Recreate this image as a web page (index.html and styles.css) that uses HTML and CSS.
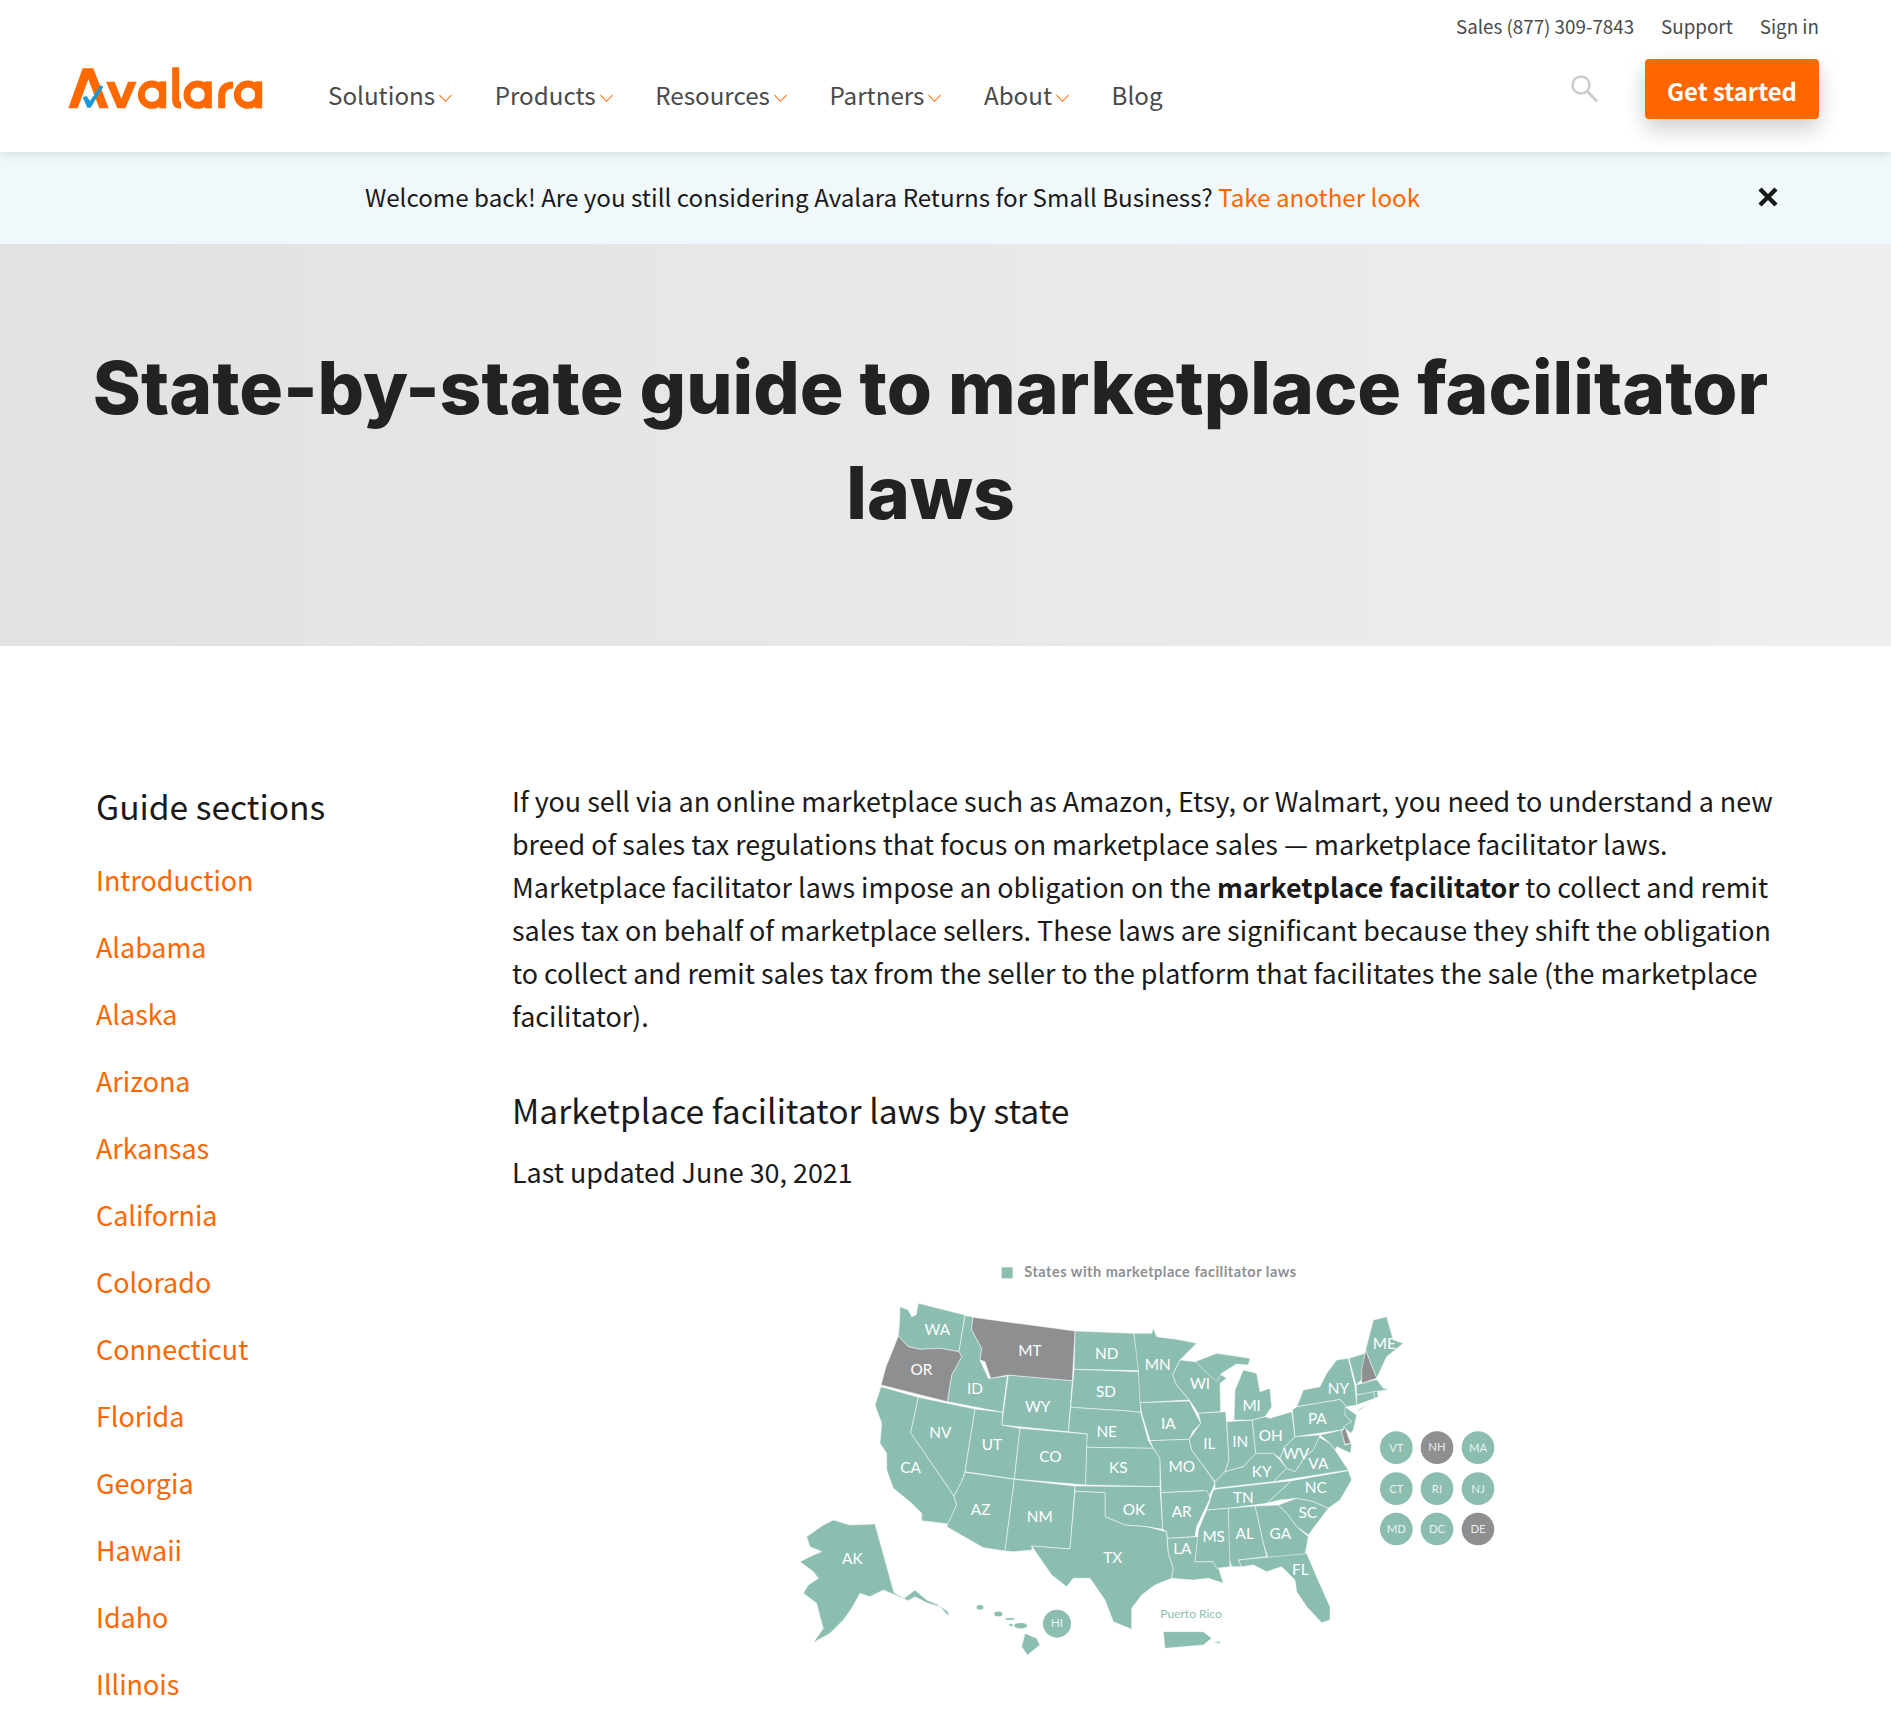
FILE: index.html
```html
<!DOCTYPE html>
<html>
<head>
  <title>State-by-state guide to marketplace facilitator laws</title>
  <meta name="viewport" content="width=device-width, initial-scale=1.0">
  <link rel="stylesheet" href="styles.css">
</head>
<body>
  <header class="site-header">
    <div class="top-links">
      <a href="#">Sales (877) 309-7843</a>
      <a href="#">Support</a>
      <a href="#">Sign in</a>
    </div>
    <div class="main-row">
      <a class="logo" href="#" aria-label="Avalara">
        <svg width="240" height="90" viewBox="0 0 720 270">
          <g fill="#ff6900">
            <polygon points="55,205 98,85 130,85 176,205 148,205 115,118 83,205"/>
            <polygon points="168,125 194,125 214,176 234,125 260,125 226,205 202,205"/>
          </g>
          <polygon points="98,172 110,168 120,183 152,136 160,140 122,203 112,203" fill="#1a9ad6"/>
          <g fill="none" stroke="#ff6900" stroke-width="21">
            <circle cx="306" cy="164" r="32"/>
            <line x1="338" y1="124" x2="338" y2="205"/>
            <path d="M377 82 V180 Q377 196 393 196"/>
            <circle cx="443" cy="164" r="32"/>
            <line x1="475" y1="124" x2="475" y2="205"/>
            <path d="M515 205 V168 Q515 136 549 135"/>
            <circle cx="594" cy="164" r="32"/>
            <line x1="626" y1="124" x2="626" y2="205"/>
          </g>
        </svg>
      </a>
      <nav class="main-nav">
        <a href="#">Solutions<span class="caret"></span></a>
        <a href="#">Products<span class="caret"></span></a>
        <a href="#">Resources<span class="caret"></span></a>
        <a href="#">Partners<span class="caret"></span></a>
        <a href="#">About<span class="caret"></span></a>
        <a href="#">Blog</a>
      </nav>
      <svg class="search-icon" width="30" height="30" viewBox="0 0 30 30">
        <circle cx="11" cy="11" r="8.5" fill="none" stroke="#ccc" stroke-width="2.5"/>
        <line x1="17" y1="17" x2="27" y2="27.5" stroke="#ccc" stroke-width="3"/>
      </svg>
      <a class="btn-start" href="#">Get started</a>
    </div>
  </header>

  <div class="welcome-bar">
    <p>Welcome back! Are you still considering Avalara Returns for Small Business? <a href="#">Take another look</a></p>
    <svg class="close-icon" width="20" height="20" viewBox="0 0 20 20">
      <path d="M2 2 L18 18 M18 2 L2 18" stroke="#1a1a1a" stroke-width="4.4" fill="none"/>
    </svg>
  </div>

  <section class="hero">
    <h1>State-by-state guide to marketplace facilitator laws</h1>
  </section>

  <div class="guide">
    <aside class="sections">
      <h2>Guide sections</h2>
      <ul>
        <li><a href="#">Introduction</a></li>
        <li><a href="#">Alabama</a></li>
        <li><a href="#">Alaska</a></li>
        <li><a href="#">Arizona</a></li>
        <li><a href="#">Arkansas</a></li>
        <li><a href="#">California</a></li>
        <li><a href="#">Colorado</a></li>
        <li><a href="#">Connecticut</a></li>
        <li><a href="#">Florida</a></li>
        <li><a href="#">Georgia</a></li>
        <li><a href="#">Hawaii</a></li>
        <li><a href="#">Idaho</a></li>
        <li><a href="#">Illinois</a></li>
      </ul>
    </aside>
    <main class="article">
      <p class="intro">If you sell via an online marketplace such as Amazon, Etsy, or Walmart, you need to understand a new breed of sales tax regulations that focus on marketplace sales — marketplace facilitator laws. Marketplace facilitator laws impose an obligation on the <b>marketplace facilitator</b> to collect and remit sales tax on behalf of marketplace sellers. These laws are significant because they shift the obligation to collect and remit sales tax from the seller to the platform that facilitates the sale (the marketplace facilitator).</p>
      <h3>Marketplace facilitator laws by state</h3>
      <p class="updated">Last updated June 30, 2021</p>

      <!-- map, coordinates are 3x page pixels -->
      <svg class="us-map" width="740" height="420" viewBox="0 0 2220 1260">
        <rect x="665" y="52" width="33" height="33" fill="#8bbdb0"/>
        <text class="legend" x="733" y="80">States with marketplace facilitator laws</text>

        <g class="states">
          <polygon points="360,170 385,180 395,200 408,195 415,160 555,195 537,305 480,295 420,298 385,290 355,258 358,225"/>
          <polygon points="303,410 415,442 392,548 522,738 530,765 505,822 425,812 425,790 395,760 340,715 320,660 320,610 300,580 305,520 285,465"/>
          <polygon points="415,442 585,477 555,665 545,695 522,738 392,548"/>
          <polygon points="555,197 578,200 575,240 605,295 600,330 625,385 682,378 668,487 502,455 515,375 545,320 537,305"/>
          <polygon points="685,375 877,392 865,545 665,525"/>
          <polygon points="585,477 668,487 665,525 720,535 703,687 555,665"/>
          <polygon points="720,535 922,552 917,705 703,687"/>
          <polygon points="555,667 703,688 675,903 610,893 500,830 530,765 522,738 545,695"/>
          <polygon points="703,688 885,708 870,897 755,888 757,900 700,905 675,903"/>
          <polygon points="885,243 1062,250 1080,362 882,358"/>
          <polygon points="882,358 1075,365 1080,400 1082,487 1030,482 872,472"/>
          <polygon points="872,472 1030,482 1082,487 1105,572 1120,595 920,592 922,552 865,545"/>
          <polygon points="920,592 1120,595 1140,625 1140,710 917,705"/>
          <polygon points="885,708 1140,710 1148,838 1100,830 1035,825 975,800 975,728 885,724"/>
          <polygon points="885,724 975,728 975,800 1035,825 1100,830 1160,845 1165,910 1180,955 1175,985 1125,1005 1085,1035 1055,1075 1055,1138 1000,1115 975,1050 930,985 880,985 860,1010 815,975 755,888 870,897"/>
          <polygon points="1062,250 1115,250 1120,235 1130,260 1190,268 1250,280 1200,330 1178,375 1190,405 1228,450 1080,458 1075,362"/>
          <polygon points="1080,458 1228,453 1262,520 1238,545 1228,568 1110,572 1085,490"/>
          <polygon points="1110,572 1228,568 1235,600 1300,690 1305,700 1285,745 1270,722 1143,728 1140,625 1120,595"/>
          <polygon points="1143,728 1282,722 1290,745 1250,830 1245,860 1162,865 1160,845 1148,838"/>
          <polygon points="1162,865 1255,860 1245,935 1310,935 1330,1000 1285,985 1240,990 1175,985 1180,955 1165,910"/>
          <polygon points="1200,330 1245,335 1300,360 1340,385 1320,400 1322,485 1255,490 1228,450 1190,405 1178,375"/>
          <polygon points="1255,490 1337,485 1340,520 1347,630 1335,665 1305,695 1235,600 1228,568 1262,520"/>
          <polygon points="1340,515 1417,510 1427,610 1390,650 1335,665 1347,630"/>
          <polygon points="1245,335 1310,310 1345,315 1410,325 1405,345 1370,342 1325,370 1310,395"/>
          <polygon points="1362,510 1365,420 1390,360 1430,370 1440,425 1470,415 1475,470 1455,500 1417,510"/>
          <polygon points="1417,510 1455,500 1470,505 1535,485 1545,560 1515,590 1500,625 1480,610 1427,610"/>
          <polygon points="1427,610 1480,610 1500,630 1520,655 1480,695 1305,715 1305,695 1335,665 1390,650"/>
          <polygon points="1310,717 1535,692 1460,760 1345,775 1280,780 1300,720"/>
          <polygon points="1535,692 1705,662 1715,690 1680,750 1645,775 1600,755 1550,745 1500,750 1460,760"/>
          <polygon points="1480,695 1520,655 1545,665 1575,620 1600,600 1615,560 1650,580 1665,600 1705,660"/>
          <polygon points="1500,625 1515,590 1545,560 1620,555 1600,600 1575,620 1545,665 1520,655"/>
          <polygon points="1537,480 1550,470 1680,448 1700,470 1695,495 1715,515 1685,540 1545,560"/>
          <polygon points="1620,555 1685,540 1695,585 1715,580 1712,610 1670,590 1665,600 1650,580"/>
          <polygon points="1695,470 1730,495 1720,540 1712,550 1690,530 1715,515 1695,495"/>
          <polygon points="1550,470 1570,420 1620,410 1640,370 1670,330 1705,325 1725,410 1730,465 1700,470 1680,448"/>
          <polygon points="1725,485 1775,455 1740,480"/>
          <polygon points="1707,325 1755,310 1745,390 1728,405"/>
          <polygon points="1757,300 1780,210 1820,200 1840,270 1870,280 1820,320 1790,385"/>
          <polygon points="1728,405 1790,388 1810,415 1828,418 1790,425 1730,435"/>
          <polygon points="1730,435 1780,425 1785,445 1730,465"/>
          <polygon points="1780,425 1792,423 1795,440 1785,445"/>
          <polygon points="1495,765 1550,745 1600,755 1645,775 1585,855 1550,830 1520,790"/>
          <polygon points="1425,768 1495,765 1520,790 1550,830 1585,860 1575,915 1465,928 1450,880"/>
          <polygon points="1345,775 1425,768 1450,880 1460,920 1375,930 1385,950 1355,950 1345,920"/>
          <polygon points="1280,780 1345,775 1350,950 1310,955 1300,935 1245,935 1255,840"/>
          <polygon points="1375,930 1460,922 1568,912 1580,910 1610,980 1650,1070 1650,1110 1625,1118 1580,1070 1550,1025 1545,990 1505,950 1460,965 1420,945 1385,950"/>
          <polygon points="160,810 210,825 285,822 342,1028 372,1045 405,1020 440,1050 470,1062 505,1085 505,1098 480,1070 440,1058 405,1040 385,1052 345,1035 310,1020 270,1040 240,1030 215,1075 190,1110 150,1150 100,1178 130,1135 120,1100 110,1060 70,1030 85,1005 115,985 100,965 60,935 100,915 125,905 90,890 80,860 130,825"/>
          <ellipse cx="600" cy="1072" rx="11" ry="8"/>
          <ellipse cx="655" cy="1092" rx="13" ry="8"/>
          <ellipse cx="690" cy="1107" rx="14" ry="4"/>
          <ellipse cx="693" cy="1125" rx="7" ry="4"/>
          <ellipse cx="722" cy="1127" rx="20" ry="9"/>
          <polygon points="735,1150 770,1165 780,1185 742,1215 725,1190"/>
          <polygon points="1150,1145 1270,1145 1295,1165 1270,1185 1155,1195"/>
          <polygon points="1300,1178 1322,1172 1318,1180"/>
        </g>
        <g class="states off">
          <polygon points="355,258 385,290 420,298 480,295 537,305 545,320 515,375 502,455 303,405 318,350"/>
          <polygon points="578,202 885,243 877,392 685,375 632,385 615,335 600,330 605,295 575,240"/>
          <polygon points="1757,300 1790,385 1745,400 1745,360"/>
          <polygon points="1685,545 1695,532 1712,580 1695,583"/>
        </g>

        <g class="labels">
          <text x="472" y="254">WA</text><text x="750" y="318">MT</text><text x="424" y="376">OR</text>
          <text x="585" y="432">ID</text><text x="980" y="328">ND</text><text x="978" y="441">SD</text>
          <text x="773" y="486">WY</text><text x="1133" y="361">MN</text><text x="1260" y="416">WI</text>
          <text x="1415" y="483">MI</text><text x="1165" y="538">IA</text><text x="980" y="561">NE</text>
          <text x="481" y="563">NV</text><text x="636" y="601">UT</text><text x="811" y="636">CO</text>
          <text x="1288" y="597">IL</text><text x="1381" y="591">IN</text><text x="392" y="669">CA</text>
          <text x="1015" y="668">KS</text><text x="1205" y="666">MO</text><text x="1062" y="794">OK</text>
          <text x="602" y="794">AZ</text><text x="779" y="816">NM</text><text x="1205" y="802">AR</text>
          <text x="1390" y="758">TN</text><text x="1301" y="877">MS</text><text x="1394" y="868">AL</text>
          <text x="1207" y="911">LA</text><text x="998" y="938">TX</text><text x="217" y="943">AK</text>
          <text x="1472" y="573">OH</text><text x="1612" y="521">PA</text><text x="1675" y="431">NY</text>
          <text x="1813" y="296">ME</text><text x="1445" y="681">KY</text><text x="1548" y="626">WV</text>
          <text x="1615" y="656">VA</text><text x="1607" y="728">NC</text><text x="1583" y="804">SC</text>
          <text x="1501" y="868">GA</text><text x="1561" y="974">FL</text>
        </g>

        <text class="pr-label" x="1141" y="1103">Puerto Rico</text>

        <g class="dots">
          <circle cx="831" cy="1121" r="42"/>
          <circle cx="1849" cy="593" r="49"/>
          <circle cx="2094" cy="593" r="49"/>
          <circle cx="1849" cy="716" r="49"/>
          <circle cx="1971" cy="716" r="49"/>
          <circle cx="2094" cy="716" r="49"/>
          <circle cx="1849" cy="837" r="49"/>
          <circle cx="1971" cy="837" r="49"/>
          <circle class="off" cx="1971" cy="593" r="49"/>
          <circle class="off" cx="2094" cy="837" r="49"/>
        </g>
        <g class="dot-labels">
          <text x="831" y="1132">HI</text>
          <text x="1849" y="606">VT</text><text x="1971" y="604">NH</text><text x="2094" y="606">MA</text>
          <text x="1849" y="729">CT</text><text x="1971" y="729">RI</text><text x="2094" y="729">NJ</text>
          <text x="1849" y="849">MD</text><text x="1971" y="849">DC</text><text x="2094" y="849">DE</text>
        </g>
      </svg>
    </main>
  </div>
</body>
</html>
```

FILE: styles.css
```css
body {
  margin: 0;
  height: 1729px;
  overflow: hidden;
  font-family: "Noto Sans CJK SC", "Noto Sans", sans-serif;
  color: #1a1a1a;
  background-color: #fff;
}
a {
  color: #ff6600;
  text-decoration: none;
}

/* header */
.site-header {
  position: relative;
  z-index: 1;
  height: 152px;
  background-color: #fff;
  box-shadow: 0 2px 10px rgba(0, 0, 0, 0.12);
}
.top-links {
  display: flex;
  justify-content: flex-end;
  gap: 27px;
  height: 59px;
  padding: 11px 72px 0 0;
  box-sizing: border-box;
  font-size: 18.8px;
  line-height: 30px;
}
.top-links a {
  color: #4a4a4a;
}
.main-row {
  display: flex;
  padding: 0 72px 0 50px;
}
.logo {
  display: block;
  height: 90px;
  margin-top: -19px;
}
.main-nav {
  display: flex;
  gap: 42.5px;
  margin-left: 38px;
  padding-top: 16px;
  font-size: 24.2px;
  line-height: 40px;
}
.main-nav a {
  color: #4a4a4a;
}
.caret {
  display: inline-block;
  width: 8px;
  height: 8px;
  margin: 0 2px 5px 6px;
  border-right: 1.5px solid #ff6600;
  border-bottom: 1.5px solid #ff6600;
  transform: rotate(45deg);
}
.search-icon {
  margin: 15px 45px 0 auto;
}
.btn-start {
  width: 174px;
  height: 60px;
  border-radius: 4px;
  background-color: #ff6600;
  box-shadow: 0 10px 22px rgba(0, 0, 0, 0.2);
  color: #fff;
  font-size: 23.8px;
  font-weight: 700;
  line-height: 63px;
  text-align: center;
}

/* welcome bar */
.welcome-bar {
  position: relative;
  height: 92px;
  background-color: #f1f8fb;
  text-align: center;
}
.welcome-bar p {
  margin: 0;
  padding-right: 106px;
  font-size: 24.2px;
  line-height: 90px;
}
.close-icon {
  position: absolute;
  top: 35px;
  right: 113px;
}

/* hero */
.hero {
  height: 402px;
  padding: 91px 30px 0 0;
  box-sizing: border-box;
  background: linear-gradient(to right, #e2e2e2, #eeeeee);
  text-align: center;
}
.hero h1 {
  margin: 0 auto;
  width: 1780px;
  font-family: Inter, Lato, sans-serif;
  font-size: 73px;
  font-weight: 800;
  line-height: 105px;
  color: #222;
}

/* guide */
.guide {
  display: grid;
  grid-template-columns: 416px 1264px;
  padding: 134px 0 0 96px;
}
.sections h2 {
  margin: 3px 0 0;
  font-size: 33.6px;
  font-weight: 400;
  line-height: 46px;
}
.sections ul {
  margin: 29px 0 0;
  padding: 0;
  list-style: none;
}
.sections li {
  height: 67px;
  font-size: 26.9px;
  line-height: 44px;
}
.article .intro {
  margin: 0;
  font-size: 26.9px;
  line-height: 42.9px;
}
.article b {
  font-weight: 700;
}
.article h3 {
  margin: 50px 0 0;
  font-size: 33.6px;
  font-weight: 400;
  line-height: 46px;
}
.updated {
  margin: 18px 0 0;
  font-size: 26.9px;
  line-height: 42px;
}
.us-map {
  display: block;
  margin: 57px 0 0 268px;
}

/* map */
.states polygon, .states ellipse {
  fill: #8bbdb0;
  stroke: #fff;
  stroke-width: 1.5;
}
.states.off polygon {
  fill: #8e8f91;
}
.labels text, .dot-labels text {
  fill: #fff;
  font-family: Lato, sans-serif;
  text-anchor: middle;
}
.labels text {
  font-size: 46px;
}
.dot-labels text {
  font-size: 34px;
  fill-opacity: 0.85;
}
.dots circle {
  fill: #8bbdb0;
}
.dots circle.off {
  fill: #8e8f91;
}
.legend {
  fill: #8e8f91;
  font-family: Lato, sans-serif;
  font-size: 43.5px;
  font-weight: 700;
  letter-spacing: 1.5px;
}
.pr-label {
  fill: #8bbdb0;
  font-family: Lato, sans-serif;
  font-size: 36px;
}
```
